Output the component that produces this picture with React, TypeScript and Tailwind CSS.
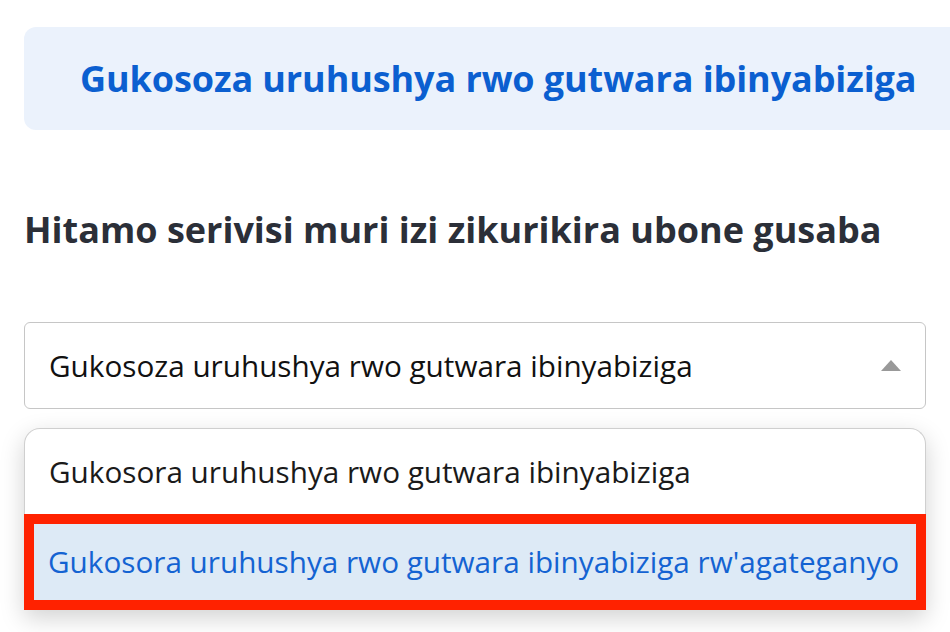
import React from 'react';

const font = { fontFamily: '"Open Sans", Lato, sans-serif' };

export default function App() {
  return (
    <div className="w-[950px] h-[632px] overflow-hidden bg-white" style={font}>
      <div className="pl-6 pt-[27px]">
        <div className="w-[940px] h-[103px] rounded-xl bg-[#ebf2fc] flex items-center pl-14">
          <h1 className="text-[36px] font-bold text-[#0b5fd0] leading-none tracking-[-0.1px]">
            Gukosoza uruhushya rwo gutwara ibinyabiziga
          </h1>
        </div>
      </div>

      <div className="px-6">
        <h2 className="mt-[82px] text-[36px] font-bold text-[#2b2f38] leading-none">
          Hitamo serivisi muri izi zikurikira ubone gusaba
        </h2>

        <div className="mt-[74px] h-[87px] rounded-md border border-[#c6c6c6] bg-white flex items-center justify-between pl-6 pr-6">
          <span className="text-[29.7px] text-[#111] leading-none">Gukosoza uruhushya rwo gutwara ibinyabiziga</span>
          <svg width="20" height="12" viewBox="0 0 20 12">
            <polygon points="10,0 20,11 0,11" fill="#999" />
          </svg>
        </div>

        <div className="mt-[19px] rounded-t-2xl border-t border-x border-[#cfcfcf] bg-white shadow-[0_8px_24px_rgba(0,0,0,0.18)]">
          <div className="h-[85px] flex items-center px-6">
            <span className="text-[29.7px] text-[#1a1a1a] leading-none">Gukosora uruhushya rwo gutwara ibinyabiziga</span>
          </div>
          <div className="-mx-px h-[96px] border-[10px] border-[#ff2200] bg-[#ddeaf6] flex items-center px-[14px]">
            <span className="text-[29.7px] text-[#1463d2] leading-none whitespace-nowrap">
              Gukosora uruhushya rwo gutwara ibinyabiziga rw'agateganyo
            </span>
          </div>
        </div>
      </div>
    </div>
  );
}
